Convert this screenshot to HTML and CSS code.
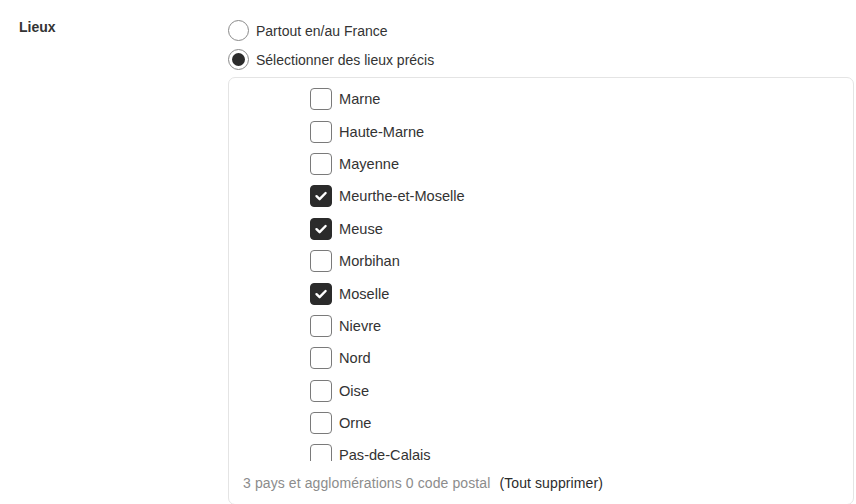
FILE: index.html
```html
<!DOCTYPE html>
<html lang="fr">
<head>
<meta charset="utf-8">
<title>Lieux</title>
<link rel="stylesheet" href="styles.css">
</head>
<body>
<div class="field">
  <div class="field-label">Lieux</div>
  <div class="field-body">
    <label class="radio-row"><span class="radio"></span><span>Partout en/au France</span></label>
    <label class="radio-row"><span class="radio checked"></span><span>Sélectionner des lieux précis</span></label>
    <div class="picker">
      <div class="list">
        <div class="list-inner">
          <div class="item"><span class="cb"></span><span>Marne</span></div>
          <div class="item"><span class="cb"></span><span>Haute-Marne</span></div>
          <div class="item"><span class="cb"></span><span>Mayenne</span></div>
          <div class="item"><span class="cb on"><svg viewBox="0 0 22 22" width="22" height="22"><polyline points="6.5,11.2 9.6,14.2 15.6,8" fill="none" stroke="#fff" stroke-width="2.4" stroke-linecap="round" stroke-linejoin="round"/></svg></span><span>Meurthe-et-Moselle</span></div>
          <div class="item"><span class="cb on"><svg viewBox="0 0 22 22" width="22" height="22"><polyline points="6.5,11.2 9.6,14.2 15.6,8" fill="none" stroke="#fff" stroke-width="2.4" stroke-linecap="round" stroke-linejoin="round"/></svg></span><span>Meuse</span></div>
          <div class="item"><span class="cb"></span><span>Morbihan</span></div>
          <div class="item"><span class="cb on"><svg viewBox="0 0 22 22" width="22" height="22"><polyline points="6.5,11.2 9.6,14.2 15.6,8" fill="none" stroke="#fff" stroke-width="2.4" stroke-linecap="round" stroke-linejoin="round"/></svg></span><span>Moselle</span></div>
          <div class="item"><span class="cb"></span><span>Nievre</span></div>
          <div class="item"><span class="cb"></span><span>Nord</span></div>
          <div class="item"><span class="cb"></span><span>Oise</span></div>
          <div class="item"><span class="cb"></span><span>Orne</span></div>
          <div class="item"><span class="cb"></span><span>Pas-de-Calais</span></div>
        </div>
      </div>
      <div class="footer">
        <span class="count">3 pays et agglomérations 0 code postal</span>
        <span class="clear">(Tout supprimer)</span>
      </div>
    </div>
  </div>
</div>
</body>
</html>
```

FILE: styles.css
```css
html, body {
  margin: 0;
  padding: 0;
  background: #ffffff;
}
body {
  font-family: "Liberation Sans", Arial, sans-serif;
  font-size: 14px;
  color: #333333;
  overflow: hidden;
  width: 856px;
  height: 504px;
}
.field {
  display: flex;
  align-items: flex-start;
}
.field-label {
  width: 209px;
  padding-left: 19px;
  padding-top: 17px;
  line-height: 20px;
  font-weight: bold;
  color: #333;
}
.field-body {
  width: 626px;
  padding-top: 16px;
}
.radio-row {
  display: flex;
  align-items: center;
  height: 29px;
  gap: 7px;
}
.radio {
  box-sizing: border-box;
  width: 21px;
  height: 21px;
  border: 1px solid #8a8a8a;
  border-radius: 50%;
  display: flex;
  align-items: center;
  justify-content: center;
}
.radio.checked::after {
  content: "";
  width: 13px;
  height: 13px;
  border-radius: 50%;
  background: #2b2b2b;
}
.picker {
  margin-top: 3px;
  box-sizing: border-box;
  border: 1px solid #e4e4e4;
  border-radius: 7px;
  height: 428px;
}
.list {
  height: 383px;
  overflow: hidden;
}
.list-inner {
  padding-top: 5px;
  padding-left: 81px;
}
.item {
  display: flex;
  align-items: center;
  height: 32.4px;
  gap: 7px;
  font-size: 14.6px;
}
.cb {
  box-sizing: border-box;
  width: 22px;
  height: 22px;
  flex: none;
  border: 1px solid #7a7a7a;
  border-radius: 4px;
  background: #fff;
  display: flex;
}
.cb.on {
  background: #2b2b2b;
  border-color: #2b2b2b;
}
.cb svg {
  margin: -1px;
}
.footer {
  padding-left: 14px;
  padding-top: 13px;
  line-height: 18px;
  letter-spacing: 0.1px;
}
.count {
  color: #8c8c8c;
}
.clear {
  color: #2b2b2b;
  margin-left: 5px;
}
```
